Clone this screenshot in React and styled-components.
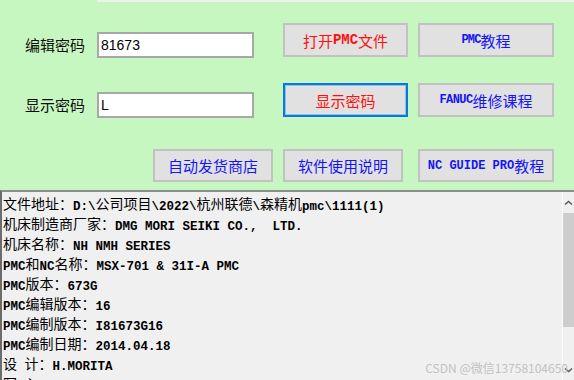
import React from 'react'
import styled, { createGlobalStyle } from 'styled-components'

const GlobalStyle = createGlobalStyle`
  html, body { margin:0; padding:0; width:574px; height:380px; overflow:hidden; background:#f0f0f0; }
  body { font-family:"Noto Sans CJK SC", sans-serif; }
`

const Window = styled.div`
  width:574px;
  height:380px;
  display:flex;
  flex-direction:column;
  overflow:hidden;
`

const Panel = styled.div`
  flex:none;
  height:190px;
  background:#c7f7c1;
`

const TopEdge = styled.div`
  height:2px;
  background:linear-gradient(to right, transparent 97px, #eef2ee 97px);
`

const Rows = styled.div`
  display:flex;
  flex-direction:column;
  padding:21px 0 0 25px;
`

const Row = styled.div`
  display:flex;
  align-items:flex-start;
  margin-top:${p => p.$gap || 0}px;
  padding-left:${p => p.$indent || 0}px;
`

const Field = styled.div`
  display:flex;
  align-items:center;
  margin-top:9px;
`

const Label = styled.span`
  width:72px;
  font-size:15px;
  color:#0c0c0c;
  line-height:26px;
`

const Input = styled.input`
  width:157px;
  height:26px;
  box-sizing:border-box;
  margin:0;
  padding:0 2px;
  border:2px solid #a8a8a8;
  background:#fff;
  font-family:"Liberation Sans", sans-serif;
  font-size:14px;
  color:#000;
  outline:none;
`

const Button = styled.button`
  width:${p => p.$w}px;
  height:${p => p.$h || 34}px;
  margin:0 0 0 ${p => p.$ml || 0}px;
  padding:0;
  box-sizing:border-box;
  display:flex;
  align-items:center;
  justify-content:center;
  background:#e1e1e1;
  border:2px solid ${p => (p.$focus ? '#0a78d6' : '#c2c2c2')};
  box-shadow:${p => (p.$focus ? 'inset 0 0 0 1px #8fc3ee' : 'none')};
  font-family:"Noto Sans CJK SC", sans-serif;
  font-size:15px;
  color:${p => (p.$red ? '#ff1010' : '#1515f5')};
  white-space:pre;
`

const Lat = styled.span`
  font-family:"Liberation Mono", monospace;
  font-size:${p => p.$size}px;
  letter-spacing:${p => p.$ls || 0}px;
  vertical-align:${p => p.$drop || 0}px;
  font-weight:bold;
  white-space:pre;
`

const Mixed = ({ text, size, ls, drop }) =>
  text
    .split(/([\x20-\x7e]+)/)
    .filter(Boolean)
    .map((part, i) =>
      /^[\x20-\x7e]+$/.test(part) ? (
        <Lat key={i} $size={size} $ls={ls} $drop={drop}>{part}</Lat>
      ) : (
        <React.Fragment key={i}>{part}</React.Fragment>
      )
    )

const Output = styled.div`
  flex:1;
  position:relative;
  display:flex;
  background:#f0f0f0;
  border-top:2px solid #8c8c8c;
  border-left:2px solid #6c6c6c;
  overflow:hidden;
`

const Lines = styled.div`
  flex:1;
  padding:1px 0 0 1px;
  font-family:"Noto Sans CJK SC", sans-serif;
  font-size:14px;
  line-height:20px;
  color:#000;
`

const Line = styled.div`
  height:20px;
  white-space:pre;
`

const Scrollbar = styled.div`
  flex:none;
  width:11px;
  display:flex;
  flex-direction:column;
  align-items:flex-start;
  border-left:1px solid #ffffff;
  background:#f0f0f0;
`

const Arrow = styled.div`
  height:21px;
  display:flex;
  align-items:center;
  padding-left:1px;
`

const Thumb = styled.div`
  width:11px;
  height:114px;
  background:#cdcdcd;
`

const Track = styled.div`
  flex:1;
`

const Watermark = styled.div`
  position:absolute;
  right:6px;
  bottom:4px;
  font-family:"Noto Sans CJK SC", sans-serif;
  font-size:12px;
  color:#c2c2c2;
  white-space:nowrap;
`

const Chevron = ({ down }) => (
  <svg width="9" height="6" viewBox="0 0 9 6">
    <path
      d={down ? 'M1 1.5 L4.5 4.5 L8 1.5' : 'M1 4.5 L4.5 1.5 L8 4.5'}
      fill="none"
      stroke="#5a5a5a"
      strokeWidth="1.6"
    />
  </svg>
)

const info = [
  '文件地址：D:\\公司项目\\2022\\杭州联德\\森精机pmc\\1111(1)',
  '机床制造商厂家：DMG MORI SEIKI CO.,  LTD.',
  '机床名称：NH NMH SERIES',
  'PMC和NC名称：MSX-701 & 31I-A PMC',
  'PMC版本：673G',
  'PMC编辑版本：16',
  'PMC编制版本：I81673G16',
  'PMC编制日期：2014.04.18',
  '设 计：H.MORITA',
  '写 入：FANUC LAD-3 VER 6.12',
]

export default function App() {
  return (
    <Window>
      <GlobalStyle />
      <Panel>
        <TopEdge />
        <Rows>
          <Row>
            <Field>
              <Label>编辑密码</Label>
              <Input readOnly value="81673" />
            </Field>
            <Button $w={125} $ml={29} $red><Mixed text="打开PMC文件" size={14} drop={-1} /></Button>
            <Button $w={136} $ml={10}><Mixed text="PMC教程" size={12} ls={-0.8} drop={-2} /></Button>
          </Row>
          <Row $gap={25}>
            <Field>
              <Label>显示密码</Label>
              <Input readOnly value="L" />
            </Field>
            <Button $w={125} $ml={29} $red $focus>显示密码</Button>
            <Button $w={136} $ml={10}><Mixed text="FANUC维修课程" size={12} ls={-0.6} drop={-2} /></Button>
          </Row>
          <Row $gap={31} $indent={128}>
            <Button $w={120} $h={33}>自动发货商店</Button>
            <Button $w={120} $h={33} $ml={10}>软件使用说明</Button>
            <Button $w={136} $h={33} $ml={15}><Mixed text="NC GUIDE PRO教程" size={12} drop={-2} /></Button>
          </Row>
        </Rows>
      </Panel>
      <Output>
        <Lines>
          {info.map((line, i) => (
            <Line key={i}><Mixed text={line} size={12.5} drop={-1} /></Line>
          ))}
        </Lines>
        <Scrollbar>
          <Arrow><Chevron /></Arrow>
          <Thumb />
          <Track />
          <Arrow><Chevron down /></Arrow>
        </Scrollbar>
        <Watermark>CSDN @微信13758104650</Watermark>
      </Output>
    </Window>
  )
}
